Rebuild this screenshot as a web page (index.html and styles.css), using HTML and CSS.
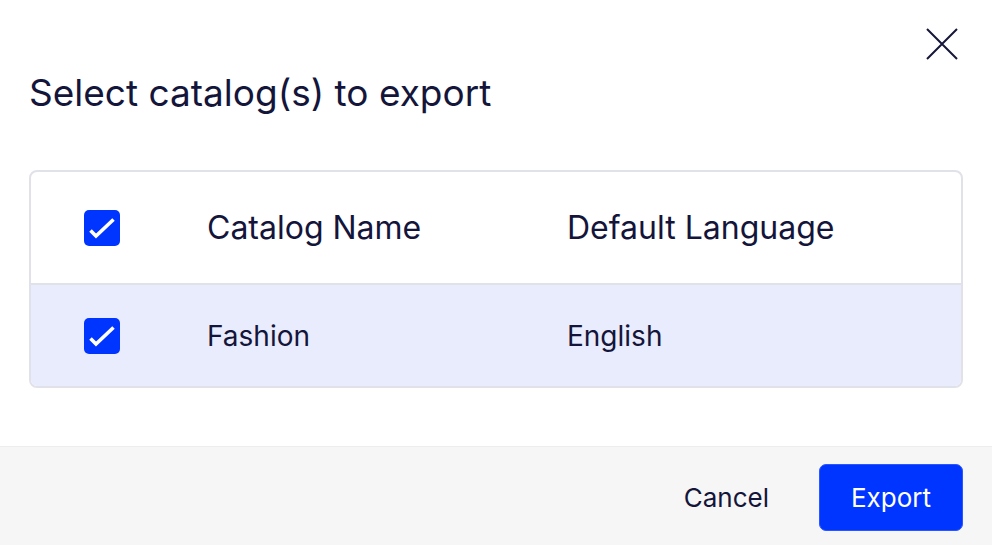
FILE: index.html
```html
<!DOCTYPE html>
<html lang="en">
<head>
<meta charset="utf-8">
<title>Export catalogs</title>
<link rel="stylesheet" href="styles.css">
</head>
<body>
<div class="dialog">
  <div class="dialog-top">
    <button class="close" aria-label="Close">
      <svg width="32" height="32" viewBox="0 0 32 32"><path d="M1 1 L31 31 M31 1 L1 31" stroke="#15163a" stroke-width="2" fill="none"/></svg>
    </button>
  </div>
  <h1 class="title">Select catalog(s) to export</h1>
  <div class="table">
    <div class="row head">
      <div class="cell check-cell"><span class="checkbox"><svg width="36" height="36" viewBox="0 0 36 36"><path d="M6.5 20.5 L12 26 L29.5 9.5" stroke="#fff" stroke-width="3.6" fill="none"/></svg></span></div>
      <div class="cell">Catalog Name</div>
      <div class="cell">Default Language</div>
    </div>
    <div class="row body selected">
      <div class="cell check-cell"><span class="checkbox"><svg width="36" height="36" viewBox="0 0 36 36"><path d="M6.5 20.5 L12 26 L29.5 9.5" stroke="#fff" stroke-width="3.6" fill="none"/></svg></span></div>
      <div class="cell">Fashion</div>
      <div class="cell">English</div>
    </div>
  </div>
  <div class="footer">
    <button class="btn-cancel">Cancel</button>
    <button class="btn-export">Export</button>
  </div>
</div>
</body>
</html>
```
FILE: styles.css
```css
html, body {
  margin: 0;
  padding: 0;
  background: #ffffff;
}
body {
  font-family: Inter, "Noto Sans", sans-serif;
  color: #14153a;
}
.dialog {
  height: 545px;
  display: flex;
  flex-direction: column;
  box-sizing: border-box;
}
.dialog-top {
  display: flex;
  justify-content: flex-end;
  padding: 28px 34px 0 0;
}
.close {
  width: 32px;
  height: 32px;
  padding: 0;
  margin: 0;
  border: 0;
  background: none;
  display: block;
}
.close svg { display: block; }
.title {
  margin: 11px 0 0 29px;
  font-size: 37px;
  line-height: 44px;
  font-weight: 400;
  letter-spacing: 0;
}
.table {
  margin: 55px 29px 0 29px;
  border: 2px solid #e1e1e9;
  border-radius: 8px;
  overflow: hidden;
}
.row {
  display: grid;
  grid-template-columns: 176px 360px 1fr;
  align-items: center;
  font-size: 28px;
}
.row.head {
  height: 111px;
  border-bottom: 2px solid #e1e1e9;
  font-size: 32px;
}
.row.body {
  height: 101px;
}
.row.selected {
  background: #e9ecfd;
}
.check-cell {
  padding-left: 53px;
  display: flex;
  align-items: center;
}
.checkbox {
  width: 36px;
  height: 36px;
  border-radius: 5px;
  background: #0035ff;
  display: block;
}
.checkbox svg { display: block; }
.footer {
  margin-top: auto;
  height: 99px;
  border-top: 1px solid #ededed;
  background: #f6f6f6;
  display: flex;
  align-items: flex-start;
  justify-content: flex-end;
  padding: 17px 29px 0 0;
  box-sizing: border-box;
  gap: 34px;
}
.btn-cancel {
  font-family: Inter, "Noto Sans", sans-serif;
  font-size: 26px;
  color: #14153a;
  background: none;
  border: 0;
  height: 67px;
  padding: 0 16px;
}
.btn-export {
  font-family: Inter, "Noto Sans", sans-serif;
  font-size: 26px;
  color: #ffffff;
  background: #0035ff;
  border: 1px solid #2a56ff;
  border-radius: 7px;
  width: 144px;
  height: 67px;
  padding: 0;
}
```
